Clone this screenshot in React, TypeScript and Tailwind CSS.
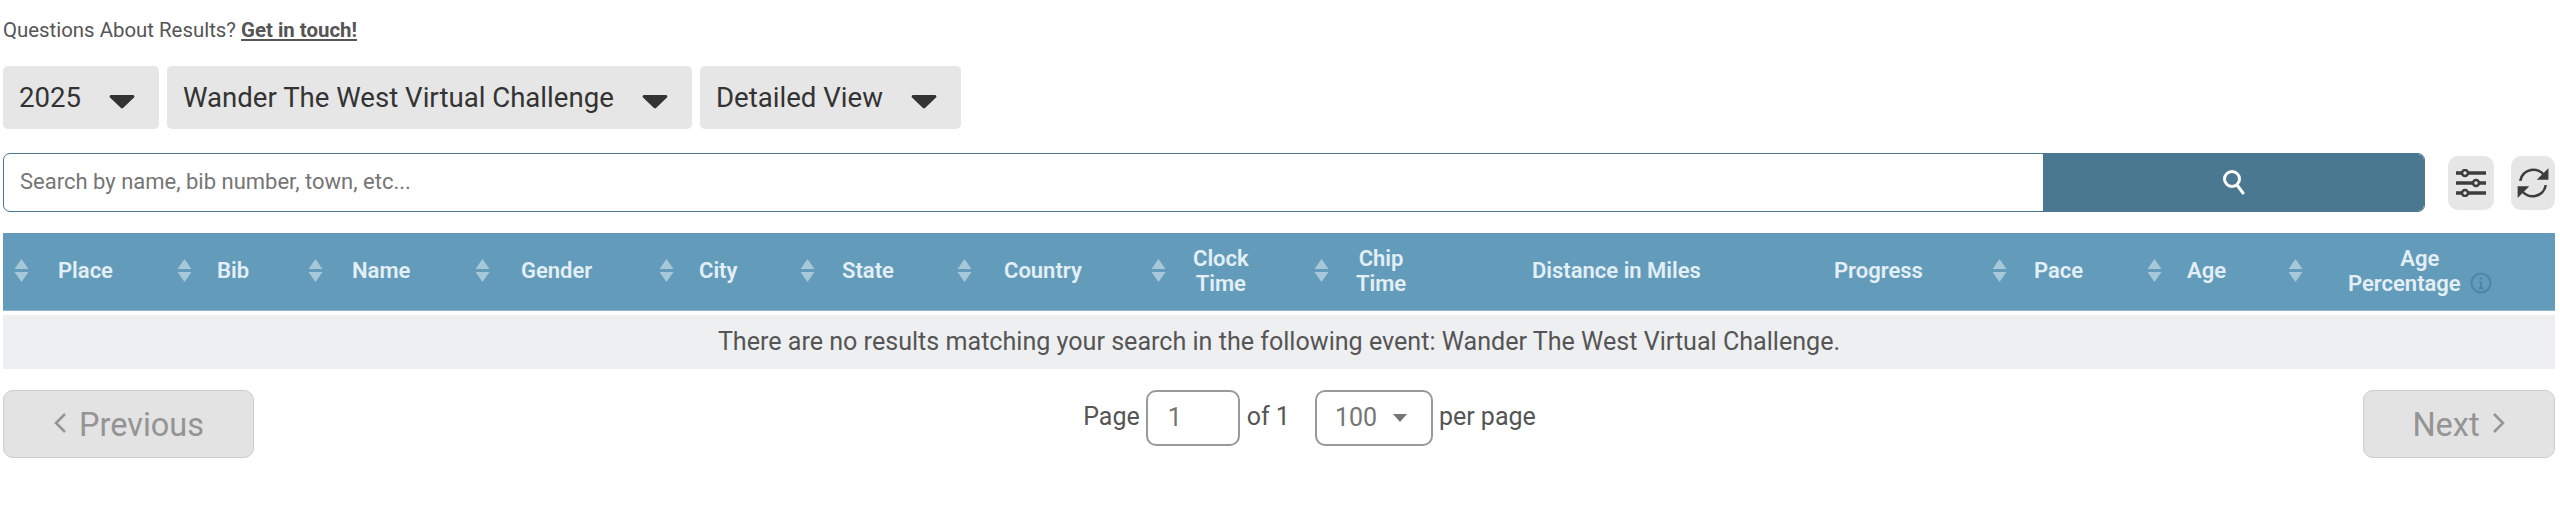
const columns = [
  { label: ['Place'], sort: true, cell: 'w-[163px] pl-[11px]', text: 'ml-[29px] text-left' },
  { label: ['Bib'], sort: true, cell: 'w-[131px] pl-[11px]', text: 'ml-[25px] text-left' },
  { label: ['Name'], sort: true, cell: 'w-[167px] pl-[11px]', text: 'ml-[29px] text-left' },
  { label: ['Gender'], sort: true, cell: 'w-[184px] pl-[11px]', text: 'ml-[31px] text-left' },
  { label: ['City'], sort: true, cell: 'w-[141px] pl-[11px]', text: 'ml-[25px] text-left' },
  { label: ['State'], sort: true, cell: 'w-[157px] pl-[11px]', text: 'ml-[27px] text-left' },
  { label: ['Country'], sort: true, cell: 'w-[194px] pl-[11px]', text: 'ml-[32px] text-left' },
  { label: ['Clock', 'Time'], sort: true, cell: 'w-[163px] pl-[11px]', text: 'ml-[27px] text-center' },
  { label: ['Chip', 'Time'], sort: true, cell: 'w-[187px] pl-[11px]', text: 'ml-[27px] text-center' },
  { label: ['Distance in Miles'], sort: false, cell: 'w-[260px] pl-[42px]', text: 'text-left' },
  { label: ['Progress'], sort: false, cell: 'w-[231px] pl-[84px]', text: 'text-left' },
  { label: ['Pace'], sort: true, cell: 'w-[155px] pl-[11px]', text: 'ml-[27px] text-left' },
  { label: ['Age'], sort: true, cell: 'w-[141px] pl-[11px]', text: 'ml-[25px] text-left' },
]

function Caret() {
  return (
    <svg width="26" height="15" viewBox="0 0 26 15" className="mt-[7px] shrink-0 text-[#333333]">
      <path d="M2 1h22a1.5 1.5 0 0 1 1 2.5L14 14a1.5 1.5 0 0 1-2 0L1 3.500A1.500 1.500 0 0 1 2 1z" fill="currentColor" />
    </svg>
  )
}

function SortIcon() {
  return (
    <svg width="15" height="25" viewBox="0 0 15 25" className="shrink-0 text-[#c5dbe6] opacity-70">
      <path d="M7.500 1 14.500 11H.5z" fill="currentColor" />
      <path d="M.5 14h14l-7 10z" fill="currentColor" />
    </svg>
  )
}

function SelectBox({ label, className }: { label: string; className: string }) {
  return (
    <div className={`flex h-[63px] items-center justify-between rounded-[5px] bg-[#e6e6e6] pl-4 pr-6 text-[27.6px] text-[#333333] ${className}`}>
      <span>{label}</span>
      <Caret />
    </div>
  )
}

function HeaderCell({ col }: { col: (typeof columns)[number] }) {
  return (
    <div className={`flex h-full shrink-0 items-center pb-[2px] ${col.cell}`}>
      {col.sort && <SortIcon />}
      <div className={`text-[22px] font-semibold leading-[25px] ${col.text}`}>
        {col.label.map((line) => (
          <div key={line}>{line}</div>
        ))}
      </div>
    </div>
  )
}

export default function App() {
  return (
    <div className="h-[510px] bg-white pl-[3px] pr-[5px] font-['Roboto',sans-serif] text-[#555555]">
      <div className="pt-[18px] text-[20.4px] leading-[24px]">
        Questions About Results?{' '}
        <a className="font-bold underline">Get in touch!</a>
      </div>

      <div className="mt-[24px] flex gap-2">
        <SelectBox label="2025" className="w-[156px]" />
        <SelectBox label="Wander The West Virtual Challenge" className="w-[525px]" />
        <SelectBox label="Detailed View" className="w-[261px]" />
      </div>

      <div className="mt-[24px] flex items-center">
        <div className="flex h-[59px] w-[2422px] overflow-hidden rounded-[7px] border border-[#4a7890]">
          <div className="flex flex-1 items-center pb-[2px] pl-4 text-[22px] text-[#757575]">
            Search by name, bib number, town, etc...
          </div>
          <div className="flex w-[381px] items-center justify-center bg-[#4a7890] pb-[2px]">
            <svg width="24" height="26" viewBox="0 0 24 26" fill="none" stroke="white" strokeWidth="3" strokeLinecap="round">
              <circle cx="10" cy="10" r="7.500" />
              <path d="m15 16 6 8" />
            </svg>
          </div>
        </div>
        <div className="ml-[23px] flex h-[54px] w-[46px] items-center justify-center rounded-[10px] bg-[#e6e6e6]">
          <svg width="30" height="28" viewBox="0 0 30 28" fill="none" stroke="#3d3d3d">
            <path d="M0 4h30M0 14h30M0 24h30" strokeWidth="3.500" />
            <circle cx="9" cy="4" r="3" fill="#e6e6e6" strokeWidth="2.500" />
            <circle cx="20" cy="14" r="3" fill="#e6e6e6" strokeWidth="2.500" />
            <circle cx="9" cy="24" r="3" fill="#e6e6e6" strokeWidth="2.500" />
          </svg>
        </div>
        <div className="ml-[17px] flex h-[54px] w-[44px] items-center justify-center rounded-[10px] bg-[#e6e6e6]">
          <svg width="34" height="34" viewBox="0 0 32 32" fill="none" stroke="#3d3d3d" strokeWidth="2.500">
            <path d="M27 9.500A12.500 12.500 0 0 0 4 14" />
            <path d="M5 22.500A12.500 12.500 0 0 0 28 18" />
            <path d="M30.500 2v11h-11z" fill="#3d3d3d" stroke="none" />
            <path d="M1.500 30V19h11z" fill="#3d3d3d" stroke="none" />
          </svg>
        </div>
      </div>

      <div className="mt-[21px] flex h-[78px] items-center border-b border-[#8fb8ce] bg-[#639cbb] text-[#e4eff5]">
        {columns.map((col) => (
          <HeaderCell key={col.label[0]} col={col} />
        ))}
        <div className="flex h-full flex-1 items-center pb-[2px] pl-[11px]">
          <SortIcon />
          <div className="ml-[45px] text-center text-[22px] font-semibold leading-[25px]">
            <div>Age</div>
            <div className="flex items-center justify-center gap-[9px]">
              Percentage
              <svg width="22" height="22" viewBox="0 0 22 22" fill="none" stroke="#4a86a8" strokeWidth="2">
                <circle cx="11" cy="11" r="9.500" />
                <path d="M11 10v6M8.500 16.500h5M9 10h2" />
                <path d="M11 5.500v2" strokeWidth="2.500" />
              </svg>
            </div>
          </div>
        </div>
      </div>

      <div className="mt-[4px] flex h-[54px] items-center justify-center bg-[#eeeff1] text-[25.1px] text-[#555555]">
        There are no results matching your search in the following event: Wander The West Virtual Challenge.
      </div>

      <div className="mt-[21px] flex items-start justify-between">
        <div className="flex h-[68px] w-[251px] items-center justify-center gap-3 rounded-[10px] border border-[#cccccc] bg-[#e3e3e3] pt-[2px] text-[32.5px] text-[#949494]">
          <svg width="14" height="24" viewBox="0 0 14 24" fill="none" stroke="#949494" strokeWidth="2.500" className="-mt-1">
            <path d="M12 3 3 12l9 9" />
          </svg>
          Previous
        </div>
        <div className="ml-[2px] flex items-center text-[25px] text-[#555555]">
          <span className="-mt-[2px]">Page</span>
          <div className="ml-[6px] flex h-[56px] w-[94px] items-center rounded-[10px] border-2 border-[#999999] pl-[20px] text-[#757575]">1</div>
          <span className="-mt-[2px] ml-[7px]">of 1</span>
          <div className="ml-[25px] flex h-[56px] w-[118px] items-center justify-between rounded-[10px] border-2 border-[#999999] pl-[18px] pr-6 text-[#757575]">
            100
            <svg width="14" height="8" viewBox="0 0 14 8">
              <path d="M0 0h14L7 8z" fill="#757575" />
            </svg>
          </div>
          <span className="-mt-[2px] ml-[6px]">per page</span>
        </div>
        <div className="flex h-[68px] w-[192px] items-center justify-center gap-3 rounded-[10px] border border-[#cccccc] bg-[#e3e3e3] pt-[2px] text-[32.5px] text-[#949494]">
          Next
          <svg width="14" height="24" viewBox="0 0 14 24" fill="none" stroke="#949494" strokeWidth="2.500" className="-mt-1">
            <path d="m2 3 9 9-9 9" />
          </svg>
        </div>
      </div>
    </div>
  )
}
